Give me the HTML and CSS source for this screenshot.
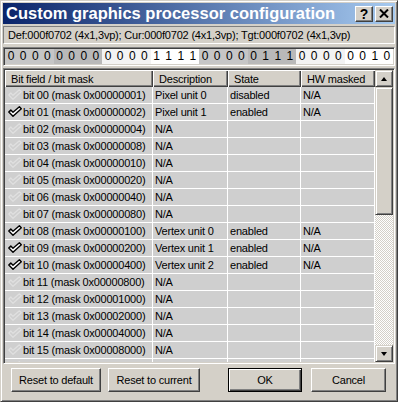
FILE: index.html
```html
<!DOCTYPE html>
<html>
<head>
    <meta charset="utf-8">
    <title>Custom graphics processor configuration</title>
    <link rel="stylesheet" href="styles.css">
</head>
<body>
    <div class="window">
        <div class="titlebar">
            <span class="title">Custom graphics processor configuration</span>
            <span class="tb-btn">?</span>
            <span class="tb-btn">
                <svg width="10" height="9" viewBox="0 0 10 9"><path d="M1 0.5 L9 8.5 M9 0.5 L1 8.5" stroke="#000" stroke-width="2"/></svg>
            </span>
        </div>

        <div class="info">Def:000f0702 (4x1,3vp); Cur:000f0702 (4x1,3vp); Tgt:000f0702 (4x1,3vp)</div>

        <!-- 0x000F0702, msb first; bytes alternate grey / white -->
        <div class="bits">
            <span class="bit g1">0</span><span class="bit g1">0</span><span class="bit g1">0</span><span class="bit g1">0</span>
            <span class="bit g2">0</span><span class="bit g2">0</span><span class="bit g2">0</span><span class="bit g2">0</span>
            <span class="bit w1">0</span><span class="bit w1">0</span><span class="bit w1">0</span><span class="bit w1">0</span>
            <span class="bit w2">1</span><span class="bit w2">1</span><span class="bit w2">1</span><span class="bit w2">1</span>
            <span class="bit g1">0</span><span class="bit g1">0</span><span class="bit g1">0</span><span class="bit g1">0</span>
            <span class="bit g2">0</span><span class="bit g2">1</span><span class="bit g2">1</span><span class="bit g2">1</span>
            <span class="bit w1">0</span><span class="bit w1">0</span><span class="bit w1">0</span><span class="bit w1">0</span>
            <span class="bit w2">0</span><span class="bit w2">0</span><span class="bit w2">1</span><span class="bit w2">0</span>
        </div>

        <div class="grid">
            <div class="grid-main">
                <table>
                    <thead>
                        <tr>
                            <th class="c-field">Bit field / bit mask</th>
                            <th class="c-desc">Description</th>
                            <th class="c-state">State</th>
                            <th class="c-hw">HW masked</th>
                        </tr>
                    </thead>
                    <tbody>
                        <tr><td class="field"><svg class="chk off" viewBox="0 0 14 11"><path d="M0.8 6 L2.8 4 L5 6.3 L11.4 0.8 L13.3 2.7 L5 10.3 Z"/></svg>bit 00 (mask 0x00000001)</td><td>Pixel unit 0</td><td>disabled</td><td>N/A</td></tr>
                        <tr><td class="field"><svg class="chk" viewBox="0 0 14 11"><path d="M0.8 6 L2.8 4 L5 6.3 L11.4 0.8 L13.3 2.7 L5 10.3 Z"/></svg>bit 01 (mask 0x00000002)</td><td>Pixel unit 1</td><td>enabled</td><td>N/A</td></tr>
                        <tr><td class="field"><svg class="chk off" viewBox="0 0 14 11"><path d="M0.8 6 L2.8 4 L5 6.3 L11.4 0.8 L13.3 2.7 L5 10.3 Z"/></svg>bit 02 (mask 0x00000004)</td><td>N/A</td><td></td><td></td></tr>
                        <tr><td class="field"><svg class="chk off" viewBox="0 0 14 11"><path d="M0.8 6 L2.8 4 L5 6.3 L11.4 0.8 L13.3 2.7 L5 10.3 Z"/></svg>bit 03 (mask 0x00000008)</td><td>N/A</td><td></td><td></td></tr>
                        <tr><td class="field"><svg class="chk off" viewBox="0 0 14 11"><path d="M0.8 6 L2.8 4 L5 6.3 L11.4 0.8 L13.3 2.7 L5 10.3 Z"/></svg>bit 04 (mask 0x00000010)</td><td>N/A</td><td></td><td></td></tr>
                        <tr><td class="field"><svg class="chk off" viewBox="0 0 14 11"><path d="M0.8 6 L2.8 4 L5 6.3 L11.4 0.8 L13.3 2.7 L5 10.3 Z"/></svg>bit 05 (mask 0x00000020)</td><td>N/A</td><td></td><td></td></tr>
                        <tr><td class="field"><svg class="chk off" viewBox="0 0 14 11"><path d="M0.8 6 L2.8 4 L5 6.3 L11.4 0.8 L13.3 2.7 L5 10.3 Z"/></svg>bit 06 (mask 0x00000040)</td><td>N/A</td><td></td><td></td></tr>
                        <tr><td class="field"><svg class="chk off" viewBox="0 0 14 11"><path d="M0.8 6 L2.8 4 L5 6.3 L11.4 0.8 L13.3 2.7 L5 10.3 Z"/></svg>bit 07 (mask 0x00000080)</td><td>N/A</td><td></td><td></td></tr>
                        <tr><td class="field"><svg class="chk" viewBox="0 0 14 11"><path d="M0.8 6 L2.8 4 L5 6.3 L11.4 0.8 L13.3 2.7 L5 10.3 Z"/></svg>bit 08 (mask 0x00000100)</td><td>Vertex unit 0</td><td>enabled</td><td>N/A</td></tr>
                        <tr><td class="field"><svg class="chk" viewBox="0 0 14 11"><path d="M0.8 6 L2.8 4 L5 6.3 L11.4 0.8 L13.3 2.7 L5 10.3 Z"/></svg>bit 09 (mask 0x00000200)</td><td>Vertex unit 1</td><td>enabled</td><td>N/A</td></tr>
                        <tr><td class="field"><svg class="chk" viewBox="0 0 14 11"><path d="M0.8 6 L2.8 4 L5 6.3 L11.4 0.8 L13.3 2.7 L5 10.3 Z"/></svg>bit 10 (mask 0x00000400)</td><td>Vertex unit 2</td><td>enabled</td><td>N/A</td></tr>
                        <tr><td class="field"><svg class="chk off" viewBox="0 0 14 11"><path d="M0.8 6 L2.8 4 L5 6.3 L11.4 0.8 L13.3 2.7 L5 10.3 Z"/></svg>bit 11 (mask 0x00000800)</td><td>N/A</td><td></td><td></td></tr>
                        <tr><td class="field"><svg class="chk off" viewBox="0 0 14 11"><path d="M0.8 6 L2.8 4 L5 6.3 L11.4 0.8 L13.3 2.7 L5 10.3 Z"/></svg>bit 12 (mask 0x00001000)</td><td>N/A</td><td></td><td></td></tr>
                        <tr><td class="field"><svg class="chk off" viewBox="0 0 14 11"><path d="M0.8 6 L2.8 4 L5 6.3 L11.4 0.8 L13.3 2.7 L5 10.3 Z"/></svg>bit 13 (mask 0x00002000)</td><td>N/A</td><td></td><td></td></tr>
                        <tr><td class="field"><svg class="chk off" viewBox="0 0 14 11"><path d="M0.8 6 L2.8 4 L5 6.3 L11.4 0.8 L13.3 2.7 L5 10.3 Z"/></svg>bit 14 (mask 0x00004000)</td><td>N/A</td><td></td><td></td></tr>
                        <tr><td class="field"><svg class="chk off" viewBox="0 0 14 11"><path d="M0.8 6 L2.8 4 L5 6.3 L11.4 0.8 L13.3 2.7 L5 10.3 Z"/></svg>bit 15 (mask 0x00008000)</td><td>N/A</td><td></td><td></td></tr>
                        <tr><td class="field"><svg class="chk off" viewBox="0 0 14 11"><path d="M0.8 6 L2.8 4 L5 6.3 L11.4 0.8 L13.3 2.7 L5 10.3 Z"/></svg>bit 16 (mask 0x00010000)</td><td>N/A</td><td></td><td></td></tr>
                    </tbody>
                </table>
            </div>
            <div class="scrollbar">
                <div class="sb-btn"><span class="arrow-up"></span></div>
                <div class="sb-thumb"></div>
                <div class="sb-track"></div>
                <div class="sb-btn"><span class="arrow-down"></span></div>
            </div>
        </div>

        <div class="actions">
            <button type="button" class="btn btn-reset"><span>Reset to default</span></button>
            <button type="button" class="btn btn-current"><span>Reset to current</span></button>
            <span class="spacer"></span>
            <button type="button" class="btn btn-ok btn-default"><span>OK</span></button>
            <button type="button" class="btn btn-cancel"><span>Cancel</span></button>
        </div>
    </div>
</body>
</html>
```

FILE: styles.css
```css
body {
    margin: 0;
    font-family: "Liberation Sans", Arial, sans-serif;
    font-size: 11px;
    letter-spacing: -0.2px;
    color: #000;
}

.window {
    width: 398px;
    height: 402px;
    box-sizing: border-box;
    background: #d4d0c8;
    border: 1px solid;
    border-color: #d4d0c8 #404040 #404040 #d4d0c8;
    box-shadow: inset 1px 1px #fff, inset -1px -1px #808080;
    padding: 2px;
    display: flex;
    flex-direction: column;
}

/* title bar */
.titlebar {
    height: 21px;
    flex-shrink: 0;
    display: flex;
    align-items: center;
    padding: 0 2px 0 3px;
    background: linear-gradient(to right, #0a246a, #a6caf0);
    color: #fff;
}

.title {
    flex: 1;
    font-weight: bold;
    font-size: 16.5px;
    letter-spacing: 0;
    white-space: nowrap;
}

.tb-btn {
    width: 18px;
    height: 16px;
    box-sizing: border-box;
    margin-left: 2px;
    display: flex;
    align-items: center;
    justify-content: center;
    background: #d4d0c8;
    border: 1px solid;
    border-color: #fff #404040 #404040 #fff;
    box-shadow: inset -1px -1px #808080;
    color: #000;
    font-weight: bold;
    font-size: 14px;
    letter-spacing: 0;
}

/* info line and bit bar */
.info {
    margin-top: 2px;
    height: 18px;
    flex-shrink: 0;
    box-sizing: border-box;
    border: 1px solid;
    border-color: #808080 #fff #fff #808080;
    padding-left: 4px;
    line-height: 16px;
    white-space: nowrap;
    overflow: hidden;
}

.bits {
    margin-top: 3px;
    height: 19px;
    flex-shrink: 0;
    box-sizing: border-box;
    display: flex;
    border: 1px solid;
    border-color: #808080 #fff #fff #808080;
    box-shadow: inset 1px 1px #404040, inset -1px -1px #d4d0c8;
    padding: 1px;
}

.bit {
    flex: 1;
    text-align: center;
    line-height: 15px;
    font-size: 12px;
    letter-spacing: 0;
}

.bit.g1 { background: #c6c6c6; }
.bit.g2 { background: #b9b9b9; }
.bit.w1 { background: #f3f3f3; }
.bit.w2 { background: #fff; }

/* list */
.grid {
    margin-top: 2px;
    height: 296px;
    flex-shrink: 0;
    box-sizing: border-box;
    display: flex;
    border: 1px solid;
    border-color: #808080 #fff #fff #808080;
    box-shadow: inset 1px 1px #404040, inset -1px -1px #d4d0c8;
    padding: 1px;
}

.grid-main {
    width: 370px;
    overflow: hidden;
    background: #cfcfcf;
}

table {
    width: 370px;
    table-layout: fixed;
    border-spacing: 0;
}

tr {
    height: 17px;
}

th {
    box-sizing: border-box;
    padding: 0 0 0 6px;
    background: #d4d0c8;
    font-weight: normal;
    text-align: left;
    line-height: 16px;
    white-space: nowrap;
    overflow: hidden;
    box-shadow: inset 1px 1px #fff, inset -1px -1px #404040, inset -2px -2px #808080;
}

th.c-field { width: 148px; }
th.c-desc { width: 75px; }
th.c-state { width: 73px; }
th.c-hw { width: 74px; }

td {
    box-sizing: border-box;
    padding: 0 0 0 2px;
    background: #cfcfcf;
    border-right: 1px solid #fff;
    border-bottom: 1px solid #fff;
    line-height: 16px;
    white-space: nowrap;
    overflow: hidden;
}

td.field {
    padding-left: 3px;
}

.chk {
    width: 14px;
    height: 11px;
    margin-right: 1px;
    vertical-align: -1px;
    fill: #fff;
    stroke: #000;
    stroke-width: 1.4;
    stroke-linejoin: round;
}

.chk.off {
    fill: none;
    stroke: #e0e0e0;
    stroke-width: 1.2;
}

/* scrollbar */
.scrollbar {
    width: 18px;
    display: flex;
    flex-direction: column;
}

.sb-btn,
.sb-thumb {
    box-sizing: border-box;
    background: #d4d0c8;
    border: 1px solid;
    border-color: #d4d0c8 #404040 #404040 #d4d0c8;
    box-shadow: inset 1px 1px #fff, inset -1px -1px #808080;
}

.sb-btn {
    height: 17px;
    display: flex;
    align-items: center;
    justify-content: center;
}

.sb-thumb {
    height: 128px;
}

.sb-track {
    flex: 1;
    background: repeating-conic-gradient(#fff 0 25%, #d4d0c8 0 50%) 0 0 / 2px 2px;
}

.arrow-up,
.arrow-down {
    width: 0;
    height: 0;
    border-left: 3.5px solid transparent;
    border-right: 3.5px solid transparent;
}

.arrow-up { border-bottom: 4px solid #000; }
.arrow-down { border-top: 4px solid #000; }

/* buttons */
.actions {
    margin-top: 4px;
    height: 24px;
    flex-shrink: 0;
    display: flex;
    padding: 0 9px 0 8px;
}

.spacer {
    flex: 1;
}

.btn {
    height: 24px;
    box-sizing: border-box;
    padding: 0;
    display: flex;
    align-items: center;
    justify-content: center;
    font-family: inherit;
    font-size: 11px;
    letter-spacing: -0.2px;
    white-space: nowrap;
    color: #000;
    background: #d4d0c8;
    border: 1px solid;
    border-color: #fff #404040 #404040 #fff;
    box-shadow: inset -1px -1px #808080;
}

.btn span {
    line-height: 14px;
}

.btn-reset { width: 90px; }
.btn-current { width: 92px; margin-left: 7px; }
.btn-ok { width: 74px; }
.btn-cancel { width: 75px; margin-left: 9px; }

.btn-default {
    border-color: #000;
    box-shadow: inset 1px 1px #fff, inset -1px -1px #404040, inset -2px -2px #808080;
}
```
